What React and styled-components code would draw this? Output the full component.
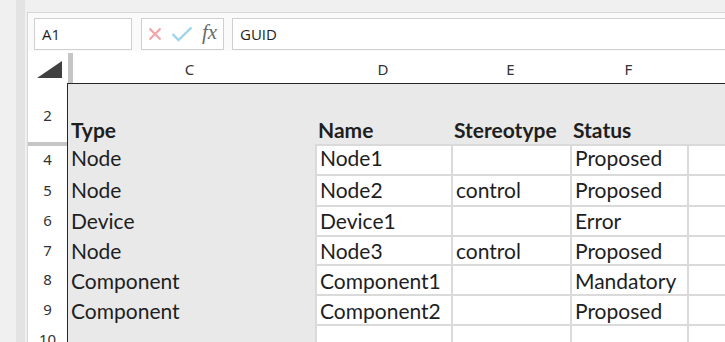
import React from 'react';
import styled, { createGlobalStyle } from 'styled-components';

const Global = createGlobalStyle`
  html, body { margin: 0; padding: 0; background: #f0f0f0; overflow: hidden; }
  body { width: 725px; height: 342px; }
`;

const Frame = styled.div`
  display: flex;
  width: 725px;
  height: 342px;
  overflow: hidden;
  background: #f0f0f0;
`;
const Gutter = styled.div`width: 16px; flex: none;`;
const Strip = styled.div`width: 9px; flex: none; background: #e3e3e3;`;
const Gap = styled.div`width: 2px; flex: none;`;
const Panel = styled.div`
  flex: 1;
  min-width: 0;
  margin-top: 12px;
  border-top: 1px solid #d6d6d6;
  border-left: 1px solid #d6d6d6;
  background: #fff;
  display: flex;
  flex-direction: column;
  overflow: hidden;
`;

const FormulaBar = styled.div`
  height: 38px;
  flex: none;
  box-sizing: border-box;
  padding: 5px 0 0 6px;
  display: flex;
  background: #fafafa;
`;
const Box = styled.div`
  height: 32px;
  box-sizing: border-box;
  border: 1px solid #cfcfcf;
  background: #fff;
  display: flex;
  align-items: center;
  font-family: "Open Sans", "Noto Sans", sans-serif;
  font-size: 15px;
  color: #1e1e1e;
`;
const NameBox = styled(Box)`
  width: 98px;
  padding-left: 7px;
`;
const ButtonBox = styled(Box)`
  width: 83px;
  margin-left: 9px;
  padding-left: 6px;
`;
const FormulaInput = styled(Box)`
  flex: 1;
  margin-left: 8px;
  border-right: none;
  padding-left: 7px;
`;
const Fx = styled.span`
  font-family: "Liberation Serif", "DejaVu Serif", serif;
  font-style: italic;
  font-size: 21px;
  color: #6b6b6b;
  margin-left: 9px;
  line-height: 1;
  margin-top: -3px;
`;

const ColHeaderRow = styled.div`
  height: 32px;
  flex: none;
  display: flex;
  background: #fff;
`;
const Corner = styled.div`
  width: 40px;
  flex: none;
  display: flex;
  align-items: flex-start;
  padding: 10px 0 0 9px;
  box-sizing: border-box;
`;

const COLS = '247px 136px 119px 117px 1fr';

const ColHeads = styled.div`
  flex: 1;
  display: grid;
  grid-template-columns: ${COLS};
`;
const ColHead = styled.div`
  display: flex;
  align-items: center;
  justify-content: center;
  padding-top: 3px;
  padding-right: ${(p) => p.$shift || 0}px;
  font-family: "Noto Sans", "Open Sans", sans-serif;
  font-size: 15px;
  color: #333;
  position: relative;
`;
const Splitter = styled.div`
  position: absolute;
  left: 0;
  top: 2px;
  width: 5px;
  height: 30px;
  background: #c6c6c6;
`;

const Body = styled.div`
  flex: 1;
  display: flex;
  min-height: 0;
`;
const RowHeads = styled.div`
  width: 39px;
  flex: none;
  padding-top: 1px;
  background: #fff;
  display: flex;
  flex-direction: column;
`;
const RowHead = styled.div`
  height: ${(p) => p.$h}px;
  flex: none;
  box-sizing: border-box;
  display: flex;
  align-items: center;
  justify-content: center;
  padding-top: ${(p) => p.$pt || 0}px;
  padding-bottom: ${(p) => p.$pbn || 0}px;
  font-family: "Noto Sans", "Open Sans", sans-serif;
  font-size: 15px;
  color: #333;
  border-bottom: ${(p) => (p.$barBelow ? '2px solid #c6c6c6' : 'none')};
  border-top: ${(p) => (p.$barAbove ? '2px solid #c6c6c6' : 'none')};
`;

const DataArea = styled.div`
  flex: 1;
  border-left: 1px solid #262626;
  border-top: 1px solid #262626;
  background: #e9e9e9;
  display: grid;
  grid-template-columns: ${COLS};
  align-content: start;
`;
const Cell = styled.div`
  box-sizing: border-box;
  display: flex;
  align-items: flex-end;
  padding: 0 0 ${(p) => p.$pb}px 3px;
  font-family: Lato, "Open Sans", sans-serif;
  font-size: 21px;
  line-height: 25px;
  font-weight: ${(p) => (p.$bold ? 700 : 400)};
  color: #1e1e1e;
  white-space: nowrap;
  overflow: hidden;
  background: ${(p) => (p.$grid ? '#fff' : 'transparent')};
  border-top: ${(p) => (p.$grid ? '2px solid #dadada' : 'none')};
  border-left: ${(p) => (p.$grid ? '2px solid #dadada' : 'none')};
`;

const XIcon = () => (
  <svg width="14" height="14" viewBox="0 0 14 14">
    <path d="M1.5 1.5 L12.5 12.5 M12.5 1.5 L1.5 12.5" stroke="#f2a3ab" strokeWidth="2.2" fill="none" />
  </svg>
);
const CheckIcon = () => (
  <svg width="22" height="16" viewBox="0 0 22 16" style={{ marginLeft: 9 }}>
    <path d="M1.5 8 L7.5 14 L20.5 1.5" stroke="#9dd5ea" strokeWidth="2.4" fill="none" />
  </svg>
);
const Triangle = () => (
  <svg width="25" height="17" viewBox="0 0 25 17">
    <polygon points="0,17 25,17 25,0" fill="#404040" />
  </svg>
);

const rows = [
  { n: '2', h: 60, pb: 2, cells: ['Type', 'Name', 'Stereotype', 'Status', ''], header: true },
  { n: '4', h: 30, pb: 4, cells: ['Node', 'Node1', '', 'Proposed', ''] },
  { n: '5', h: 31, pb: 3, cells: ['Node', 'Node2', 'control', 'Proposed', ''] },
  { n: '6', h: 30, pb: 2, cells: ['Device', 'Device1', '', 'Error', ''] },
  { n: '7', h: 29, pb: 1, cells: ['Node', 'Node3', 'control', 'Proposed', ''] },
  { n: '8', h: 30, pb: 1, cells: ['Component', 'Component1', '', 'Mandatory', ''] },
  { n: '9', h: 30, pb: 1, cells: ['Component', 'Component2', '', 'Proposed', ''] },
  { n: '10', h: 30, pb: 1, cells: ['', '', '', '', ''] },
];

export default function App() {
  return (
    <>
      <Global />
      <Frame>
        <Gutter />
        <Strip />
        <Gap />
        <Panel>
          <FormulaBar>
            <NameBox>A1</NameBox>
            <ButtonBox>
              <XIcon />
              <CheckIcon />
              <Fx>fx</Fx>
            </ButtonBox>
            <FormulaInput>GUID</FormulaInput>
          </FormulaBar>
          <ColHeaderRow>
            <Corner>
              <Triangle />
            </Corner>
            <ColHeads>
              <ColHead $shift={4}>
                <Splitter />C
              </ColHead>
              <ColHead>D</ColHead>
              <ColHead>E</ColHead>
              <ColHead>F</ColHead>
              <ColHead />
            </ColHeads>
          </ColHeaderRow>
          <Body>
            <RowHeads>
              {rows.map((r, i) => (
                <RowHead
                  key={r.n}
                  $h={r.h}
                  $barBelow={i === 0}
                  $barAbove={i === 1}
                  $pt={i === 0 ? 3 : 0}
                  $pbn={i === 1 ? 3 : 0}
                >
                  {r.n}
                </RowHead>
              ))}
            </RowHeads>
            <DataArea style={{ gridTemplateRows: rows.map((r) => r.h + 'px').join(' ') }}>
              {rows.map((r) =>
                r.cells.map((c, ci) => (
                  <Cell
                    key={r.n + '-' + ci}
                    $bold={r.header}
                    $grid={!r.header && ci > 0}
                    $pb={r.pb}
                  >
                    {c}
                  </Cell>
                ))
              )}
            </DataArea>
          </Body>
        </Panel>
      </Frame>
    </>
  );
}
